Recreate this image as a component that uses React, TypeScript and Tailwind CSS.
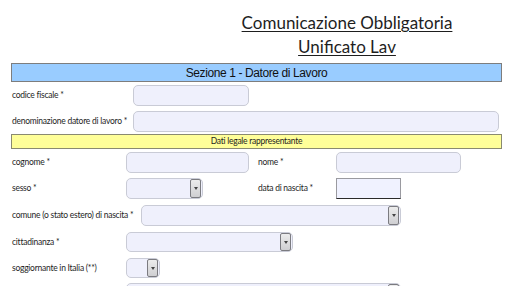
import React from 'react';

const Box = ({ w }: { w: number }) => (
  <div
    className="h-[21px] rounded-[5px] border border-[#c9cbd6] bg-[#eff0fc] shrink-0"
    style={{ width: w }}
  />
);

const Select = ({ w, short }: { w: number; short?: boolean }) => (
  <div
    className={`${short ? 'h-[20px]' : 'h-[21px]'} rounded-[5px] border border-[#c9cbd6] bg-[#eff0fc] flex justify-end items-stretch pr-px shrink-0`}
    style={{ width: w }}
  >
    <div className="w-[11px] rounded-[2px] border border-[#7b7b80] bg-gradient-to-b from-[#ececec] to-[#cfcfd2] flex items-center justify-center">
      <span className="block w-0 h-0 border-l-[2px] border-r-[2px] border-t-[3px] border-l-transparent border-r-transparent border-t-[#444]" />
    </div>
  </div>
);

const Label = ({ children, w }: { children: React.ReactNode; w: number }) => (
  <div
    className="text-[8.5px] text-[#1e1e1e] leading-none shrink-0 whitespace-nowrap tracking-[-0.25px]"
    style={{ width: w }}
  >
    {children}
  </div>
);

export default function App() {
  return (
    <div className="w-[513px] h-[286px] bg-white overflow-hidden font-['Lato','Open_Sans',sans-serif]">
      {/* titolo */}
      <div className="ml-[181px] w-[332px] pt-[11px] text-center text-[#1e1e1e] text-[17px] leading-[24px] underline underline-offset-2 decoration-1">
        <div>Comunicazione Obbligatoria</div>
        <div>Unificato Lav</div>
      </div>

      <div className="ml-[11px] w-[491px] mt-[4px] h-[19px] bg-[#99ccff] border border-[#7d7d7d] flex items-center justify-center font-['Liberation_Sans',Arial,sans-serif] text-[12px] text-[#111] tracking-[-0.4px]">
        Sezione 1 - Datore di Lavoro
      </div>

      <div className="pl-[12px] mt-[3px] flex items-center">
        <Label w={121}>codice fiscale *</Label>
        <Box w={116} />
      </div>
      <div className="pl-[12px] mt-[5px] flex items-center">
        <Label w={121}>denominazione datore di lavoro *</Label>
        <Box w={366} />
      </div>

      <div className="ml-[11px] w-[491px] mt-[2px] h-[15px] bg-[#ffff99] border border-[#8a8a70] flex items-center justify-center text-[8.5px] tracking-[-0.25px] text-[#1e1e1e]">
        Dati legale rappresentante
      </div>

      <div className="pl-[12px] mt-[3px] flex items-center">
        <Label w={114}>cognome *</Label>
        <Box w={123} />
        <Label w={87}><span className="ml-[9px]">nome *</span></Label>
        <Box w={125} />
      </div>
      <div className="pl-[12px] mt-[5px] flex items-center">
        <Label w={114}>sesso *</Label>
        <Select w={77} />
        <Label w={133}><span className="ml-[55px]">data di nascita *</span></Label>
        <div className="w-[65px] h-[21px] bg-[#f0f2ff] border border-[#9a9aa0] border-b-[#2a2a2a] shrink-0" />
      </div>
      <div className="pl-[12px] mt-[6px] flex items-center">
        <Label w={129}>comune (o stato estero) di nascita *</Label>
        <Select w={260} />
      </div>
      <div className="pl-[12px] mt-[6px] flex items-center">
        <Label w={114}>cittadinanza *</Label>
        <Select w={167} short />
      </div>
      <div className="pl-[12px] mt-[6px] flex items-center">
        <Label w={114}>soggiornante in Italia (**)</Label>
        <Select w={34} short />
      </div>
      <div className="pl-[12px] mt-[5px] flex items-center">
        <Label w={114}>&nbsp;</Label>
        <Select w={275} />
      </div>
    </div>
  );
}
